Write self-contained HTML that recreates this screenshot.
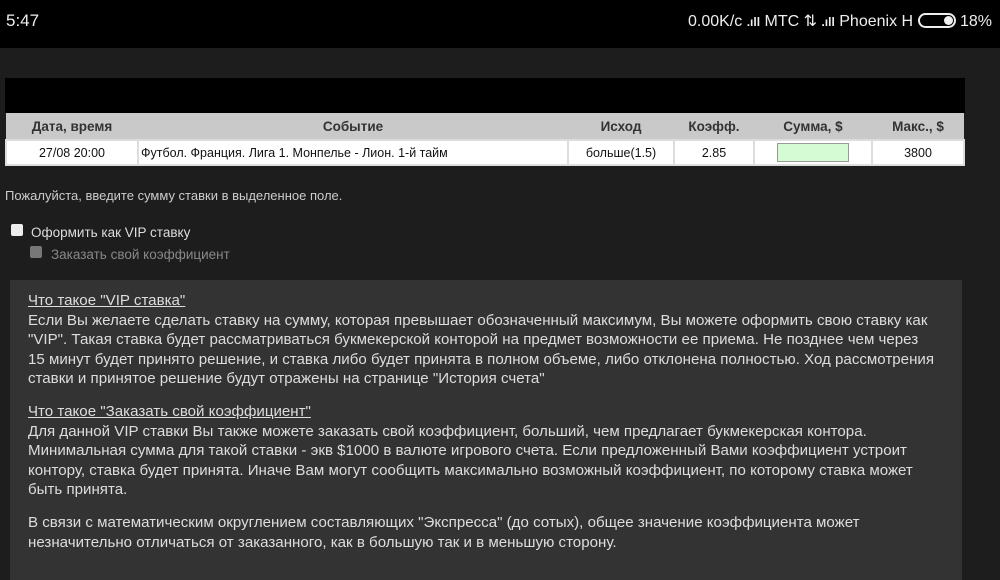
<!DOCTYPE html>
<html><head><meta charset="utf-8"><style>
*{margin:0;padding:0;box-sizing:border-box}
body{width:1000px;height:563px;overflow:hidden;background:#1d1d1d;font-family:"Liberation Sans","Noto Sans CJK SC",sans-serif;position:relative;color:#ddd}
.sb{position:absolute;left:0;top:0;width:1000px;height:48px;background:#000;color:#eee;font-family:"Liberation Sans",sans-serif;font-size:16px}
.sb .t{position:absolute;left:6px;top:11px;font-size:17px}
.sb .r{position:absolute;right:8px;top:11px;white-space:nowrap}
.blk{position:absolute;left:5px;top:78px;width:960px;height:35px;background:#000}
table{position:absolute;left:5px;top:113px;width:960px;border-collapse:collapse;font-size:12.5px}
th{background:#c9c9c9;color:#333;height:27px;font-size:13.5px;font-weight:bold}
td{background:#fff;color:#111;height:25px;text-align:center;border:2px solid #ddd}
.in{display:inline-block;width:72px;height:19px;background:#d4fbd4;border:1px solid #999;vertical-align:middle}
.p{position:absolute;font-size:13px;color:#ccc;white-space:nowrap}
.cb{position:absolute;width:12px;height:12px;border-radius:2px}
.box{position:absolute;left:10px;top:280px;width:952px;height:300px;background:#333;padding:11px 0 0 18px;font-size:15.1px;line-height:19.6px;white-space:nowrap;color:#ddd}
.box u{color:#ddd}
</style></head><body>
<div class="sb"><span class="t">5:47</span><span class="r">0.00K/c <b style="font-size:12px">.ıll</b> МТС ⇅ <b style="font-size:12px">.ıll</b> Phoenix H <span style="display:inline-block;width:38px;height:15px;border:2px solid #eee;border-radius:8px;vertical-align:-2px;position:relative"><span style="position:absolute;right:1px;top:1px;width:9px;height:9px;background:#eee;border-radius:50%"></span></span> 18%</span></div>
<div class="blk"></div>
<table>
<tr><th style="width:132px">Дата, время</th><th style="width:430px">Событие</th><th style="width:106px">Исход</th><th style="width:80px">Коэфф.</th><th style="width:118px">Сумма, $</th><th>Макс., $</th></tr>
<tr><td>27/08 20:00</td><td style="text-align:left;padding-left:2px">Футбол. Франция. Лига 1. Монпелье - Лион. 1-й тайм</td><td>больше(1.5)</td><td>2.85</td><td><span class="in"></span></td><td>3800</td></tr>
</table>
<div class="p" style="left:5px;top:188px">Пожалуйста, введите сумму ставки в выделенное поле.</div>
<div class="cb" style="left:11px;top:224px;background:#eee"></div>
<div class="p" style="left:31px;top:225px;font-size:13.5px;color:#ddd">Оформить как VIP ставку</div>
<div class="cb" style="left:30px;top:246px;background:#777"></div>
<div class="p" style="left:51px;top:247px;font-size:13.5px;color:#888">Заказать свой коэффициент</div>
<div class="box"><u>Что такое "VIP ставка"</u><br>Если Вы желаете сделать ставку на сумму, которая превышает обозначенный максимум, Вы можете оформить свою ставку как<br>"VIP". Такая ставка будет рассматриваться букмекерской конторой на предмет возможности ее приема. Не позднее чем через<br>15 минут будет принято решение, и ставка либо будет принята в полном объеме, либо отклонена полностью. Ход рассмотрения<br>ставки и принятое решение будут отражены на странице "История счета"<br><div style="height:13px"></div><u>Что такое "Заказать свой коэффициент"</u><br>Для данной VIP ставки Вы также можете заказать свой коэффициент, больший, чем предлагает букмекерская контора.<br>Минимальная сумма для такой ставки - экв $1000 в валюте игрового счета. Если предложенный Вами коэффициент устроит<br>контору, ставка будет принята. Иначе Вам могут сообщить максимально возможный коэффициент, по которому ставка может<br>быть принята.<br><div style="height:13px"></div>В связи с математическим округлением составляющих "Экспресса" (до сотых), общее значение коэффициента может<br>незначительно отличаться от заказанного, как в большую так и в меньшую сторону.</div>
</body></html>
